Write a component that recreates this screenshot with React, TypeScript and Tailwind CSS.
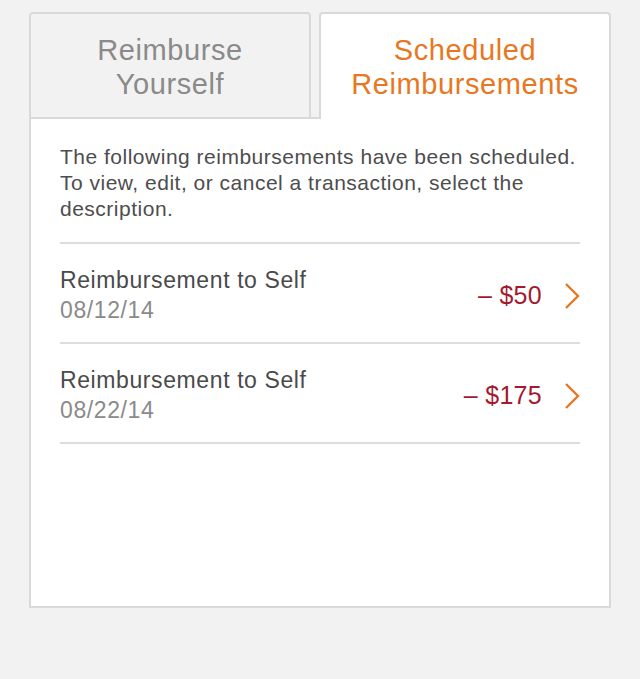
const items = [
  { title: 'Reimbursement to Self', date: '08/12/14', amount: '– $50' },
  { title: 'Reimbursement to Self', date: '08/22/14', amount: '– $175' },
]

const Chevron = () => (
  <svg width="16" height="28" viewBox="0 0 16 28" fill="none" className="shrink-0">
    <path d="M2 2 L14 14 L2 26" stroke="#e87722" strokeWidth="2.4" />
  </svg>
)

const App = () => {
  return (
    <div
      className="w-[640px] h-[679px] bg-[#f2f2f2] pt-3 px-[29px]"
      style={{ fontFamily: '"Liberation Sans", Arial, sans-serif' }}
    >
      <div className="flex items-end gap-2">
        <button
          type="button"
          className="w-[282px] h-[105px] rounded-t-[4px] border-2 border-b-0 border-[#d9d9d9] bg-[#f2f2f2] pt-[2px] text-[29px] leading-[34px] tracking-[0.6px] text-[#8a8a8a]"
        >
          Reimburse
          <br />
          Yourself
        </button>
        <button
          type="button"
          className="relative z-10 -mb-[2px] w-[292px] h-[107px] rounded-t-[4px] border-2 border-b-0 border-[#d9d9d9] bg-white text-[29px] leading-[34px] tracking-[0.6px] text-[#e87722]"
        >
          Scheduled
          <br />
          Reimbursements
        </button>
      </div>
      <div className="h-[491px] border-2 border-[#d9d9d9] bg-white px-[29px] pt-[25px]">
        <p className="text-[21px] leading-[26px] tracking-[0.5px] text-[#4d4d4d]">
          The following reimbursements have been scheduled. To view, edit, or cancel a transaction, select the
          description.
        </p>
        <div className="mt-[20px] border-t-2 border-[#dddddd]">
          {items.map((item, i) => (
            <div
              key={i}
              className="flex items-center justify-between border-b-2 border-[#dddddd] pt-[21px] pb-[17px]"
            >
              <div className="tracking-[0.6px]">
                <div className="text-[23px] leading-[30px] text-[#4a4a4a]">{item.title}</div>
                <div className="text-[23px] leading-[30px] text-[#8a8a8a]">{item.date}</div>
              </div>
              <div className="flex items-center gap-[22px] pt-[2px]">
                <span className="text-[25px] tracking-[0.3px] text-[#a3192f]">{item.amount}</span>
                <Chevron />
              </div>
            </div>
          ))}
        </div>
      </div>
    </div>
  )
}

export default App
